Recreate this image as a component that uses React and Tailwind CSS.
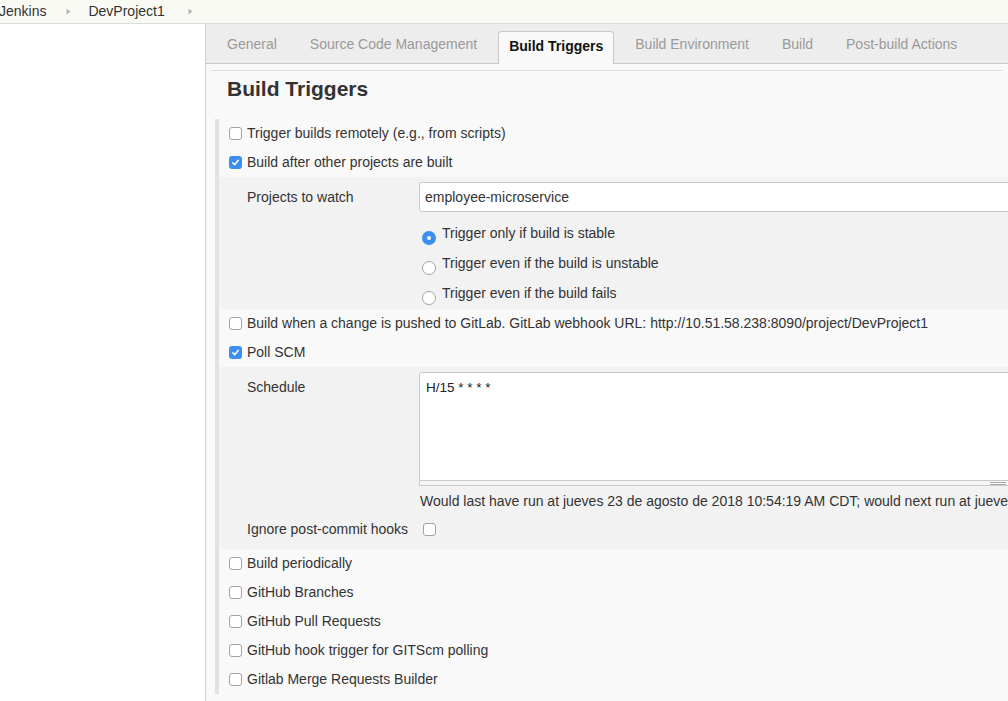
import React from 'react'

function Check({ on }) {
  if (on) {
    return (
      <span className="w-[13px] h-[13px] rounded-[3px] bg-[#3b8ef2] flex items-center justify-center shrink-0">
        <svg width="9" height="9" viewBox="0 0 10 10">
          <path d="M2 5.3 4.1 7.5 8.1 2.6" fill="none" stroke="white" strokeWidth="1.7" strokeLinecap="round" strokeLinejoin="round" />
        </svg>
      </span>
    )
  }
  return <span className="w-[13px] h-[13px] rounded-[3px] border border-[#a3a3a3] bg-white shrink-0" />
}

function Radio({ on }) {
  return on ? (
    <span className="w-[14px] h-[14px] rounded-full bg-[#3b8ef2] flex items-center justify-center shrink-0 translate-y-[5px]">
      <span className="w-[4px] h-[4px] rounded-full bg-white" />
    </span>
  ) : (
    <span className="w-[14px] h-[14px] rounded-full border border-[#a3a3a3] bg-white shrink-0 translate-y-[5px]" />
  )
}

function Row({ on, children }) {
  return (
    <div className="h-[29px] flex items-center gap-[5px] pl-[10px] whitespace-nowrap">
      <Check on={on} />
      <span>{children}</span>
    </div>
  )
}

function Arrow() {
  return (
    <svg width="5" height="7" viewBox="0 0 5 7" className="shrink-0">
      <path d="M0.5 0.5 4.5 3.5 0.5 6.5Z" fill="#b5b5b5" />
    </svg>
  )
}

const tabs = ['General', 'Source Code Management', 'Build Triggers', 'Build Environment', 'Build', 'Post-build Actions']

export default function App() {
  return (
    <div className="h-[701px] w-[1008px] overflow-hidden flex flex-col font-['Liberation_Sans',Arial,sans-serif] text-[14px] text-[#333]">
      <div className="h-[24px] shrink-0 bg-[#f9faf4] border-b border-[#dcdcdc] flex items-center text-[14px] text-[#333] whitespace-nowrap">
        <span className="-ml-[1px]">Jenkins</span>
        <span className="ml-[20px]"><Arrow /></span>
        <span className="ml-[17px]">DevProject1</span>
        <span className="ml-[23px]"><Arrow /></span>
      </div>

      <div className="flex flex-1 min-h-0">
        <div className="w-[206px] shrink-0 bg-white border-r border-[#cfcfcf]" />

        <div className="flex-1 min-w-0 bg-[#f9f9f9] overflow-hidden">
          <div className="h-[40px] bg-[#ededed] border-b border-[#c8c8c8] flex items-end gap-[9px] pl-[9px] whitespace-nowrap">
            {tabs.map((t) =>
              t === 'Build Triggers' ? (
                <div key={t} className="h-[33px] -mb-px px-[10px] pt-[4px] bg-[#f9f9f9] border border-b-0 border-[#c8c8c8] rounded-t-[4px] font-bold text-[#111]">
                  {t}
                </div>
              ) : (
                <div key={t} className="h-[32px] px-3 pt-[3px] text-[#9a9a9a]">
                  {t}
                </div>
              )
            )}
          </div>

          <div className="mt-[6px] mx-[5px] border-t border-[#dedede]" />
          <h2 className="pl-[21px] pt-[6px] h-[48px] text-[21px] font-bold text-[#333] leading-[24px]">Build Triggers</h2>

          <div className="ml-[9px] border-l-4 border-[#e2e2e2]">
            <Row>Trigger builds remotely (e.g., from scripts)</Row>
            <Row on>Build after other projects are built</Row>

            <div className="h-[132px] bg-[#f2f2f2] flex pt-[5px]">
              <div className="w-[200px] shrink-0 pl-[28px] pt-[5px]">Projects to watch</div>
              <div className="flex flex-col">
                <div className="w-[640px] h-[30px] bg-white border border-[#c9c9c9] rounded-[3px] flex items-center pl-[5px]">
                  employee-microservice
                </div>
                <div className="mt-[6px]">
                  {['Trigger only if build is stable', 'Trigger even if the build is unstable', 'Trigger even if the build fails'].map((r, i) => (
                    <div key={r} className="h-[30px] flex items-center gap-[6px] pl-[3px] whitespace-nowrap">
                      <Radio on={i === 0} />
                      <span>{r}</span>
                    </div>
                  ))}
                </div>
              </div>
            </div>

            <Row>Build when a change is pushed to GitLab. GitLab webhook URL: http://10.51.58.238:8090/project/DevProject1</Row>
            <Row on>Poll SCM</Row>

            <div className="h-[182px] bg-[#f2f2f2] flex flex-col pt-[5px]">
              <div className="flex">
                <div className="w-[200px] shrink-0 pl-[28px] pt-[5px]">Schedule</div>
                <div className="flex flex-col">
                  <div className="w-[640px] h-[109px] bg-white border border-[#c9c9c9] rounded-t-[2px] px-[6px] pt-[5px] text-[13.5px] text-[#222]">
                    H/15 * * * *
                  </div>
                  <div className="w-[640px] h-[5px] border-x border-b border-[#c9c9c9] bg-[#f6f6f6] flex justify-end items-center pr-[52px]">
                    <span className="w-[16px] h-[3px] border-y border-[#aaa]" />
                  </div>
                  <div className="h-[25px] pl-[1px] pt-[5px] text-[14px] text-[#333] whitespace-nowrap">
                    Would last have run at jueves 23 de agosto de 2018 10:54:19 AM CDT; would next run at jueves
                  </div>
                </div>
              </div>
              <div className="flex items-center h-[32px] mt-[2px]">
                <div className="w-[204px] shrink-0 pl-[28px]">Ignore post-commit hooks</div>
                <Check />
              </div>
            </div>

            <Row>Build periodically</Row>
            <Row>GitHub Branches</Row>
            <Row>GitHub Pull Requests</Row>
            <Row>GitHub hook trigger for GITScm polling</Row>
            <Row>Gitlab Merge Requests Builder</Row>
          </div>
        </div>
      </div>
    </div>
  )
}
